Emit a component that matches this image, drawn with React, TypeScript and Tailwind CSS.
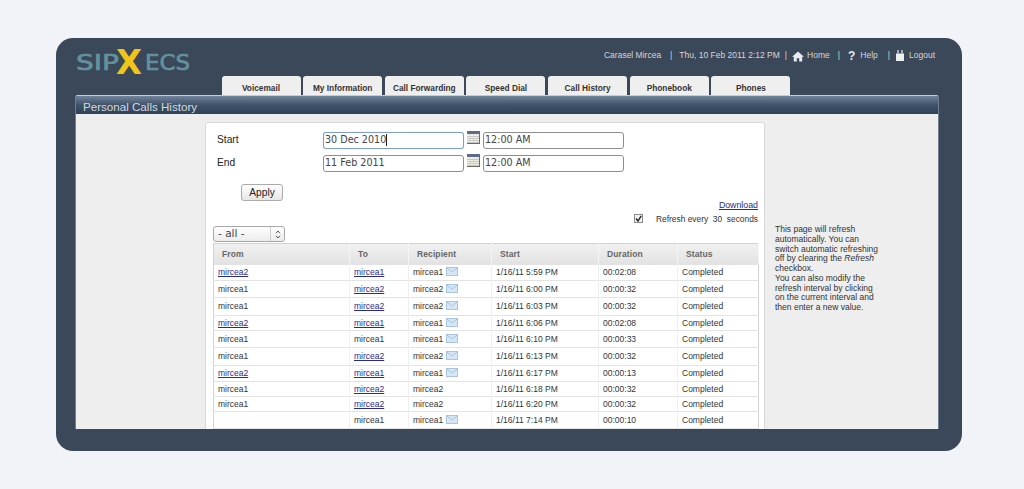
import React from "react";

const tabs = ["Voicemail", "My Information", "Call Forwarding", "Speed Dial", "Call History", "Phonebook", "Phones"];

type Row = { from: string; fromLink: boolean; to: string; toLink: boolean; rec: string; mail: boolean; start: string; dur: string; h: string };
const rows: Row[] = [
  { from: "mircea2", fromLink: true, to: "mircea1", toLink: true, rec: "mircea1", mail: true, start: "1/16/11 5:59 PM", dur: "00:02:08", h: "h-[16px]" },
  { from: "mircea1", fromLink: false, to: "mircea2", toLink: true, rec: "mircea2", mail: true, start: "1/16/11 6:00 PM", dur: "00:00:32", h: "h-[17px]" },
  { from: "mircea1", fromLink: false, to: "mircea2", toLink: true, rec: "mircea2", mail: true, start: "1/16/11 6:03 PM", dur: "00:00:32", h: "h-[18px]" },
  { from: "mircea2", fromLink: true, to: "mircea1", toLink: true, rec: "mircea1", mail: true, start: "1/16/11 6:06 PM", dur: "00:02:08", h: "h-[15px]" },
  { from: "mircea1", fromLink: false, to: "mircea1", toLink: false, rec: "mircea1", mail: true, start: "1/16/11 6:10 PM", dur: "00:00:33", h: "h-[17px]" },
  { from: "mircea1", fromLink: false, to: "mircea2", toLink: true, rec: "mircea2", mail: true, start: "1/16/11 6:13 PM", dur: "00:00:32", h: "h-[18px]" },
  { from: "mircea2", fromLink: true, to: "mircea1", toLink: true, rec: "mircea1", mail: true, start: "1/16/11 6:17 PM", dur: "00:00:13", h: "h-[16px]" },
  { from: "mircea1", fromLink: false, to: "mircea2", toLink: true, rec: "mircea2", mail: false, start: "1/16/11 6:18 PM", dur: "00:00:32", h: "h-[15px]" },
  { from: "mircea1", fromLink: false, to: "mircea2", toLink: true, rec: "mircea2", mail: false, start: "1/16/11 6:20 PM", dur: "00:00:32", h: "h-[15px]" },
  { from: "", fromLink: false, to: "mircea1", toLink: false, rec: "mircea1", mail: true, start: "1/16/11 7:14 PM", dur: "00:00:10", h: "h-[17px]" },
];

function Mail() {
  return (
    <svg width="12" height="9" viewBox="0 0 12 9" className="inline-block ml-[3px] align-[-1px]">
      <rect x="0.5" y="0.5" width="11" height="8" fill="#d6e6f4" stroke="#a8c6e0" />
      <path d="M0.5 0.8 L6 5 L11.5 0.8" fill="none" stroke="#9dbcd8" strokeWidth="0.8" />
    </svg>
  );
}

function Cal() {
  return (
    <svg width="13" height="13" viewBox="0 0 13 13" className="block">
      <rect x="0" y="0" width="13" height="13" fill="#f4f1e6" />
      <rect x="0" y="0" width="13" height="3" fill="#5d6a88" />
      <path d="M0 5.5H13M0 7.5H13M0 9.5H13M0 11.5H13" stroke="#b5b5b5" strokeWidth="0.7" />
      <path d="M3 3V13M6.5 3V13M10 3V13" stroke="#cccccc" strokeWidth="0.6" />
      <path d="M12.5 0V13M0 12.5H13" stroke="#6b6b5f" strokeWidth="1" />
    </svg>
  );
}

function Input({ value, focus }: { value: string; focus?: boolean }) {
  return (
    <div
      className={
        "w-[141px] h-[17px] rounded-[3px] bg-white px-[1px] flex items-center text-[9.6px] text-[#444] font-['DejaVu_Sans',sans-serif] border " +
        (focus ? "border-[#7f9fc4] shadow-[0_0_1px_#9fbcdc]" : "border-[#8e8e8e]")
      }
    >
      {value}
      {focus && <span className="w-px h-[12px] bg-[#222]" />}
    </div>
  );
}

const linkCls = "text-[#2c2a8c] underline";

export default function App() {
  return (
    <div className="w-[1024px] h-[489px] bg-[#f1f3f8] pt-[38px] pl-[56px] font-['Liberation_Sans',Arial,sans-serif] overflow-hidden">
      <div className="w-[906px] h-[413px] bg-[#3a4859] rounded-[17px] pb-[22px] flex flex-col">
        <div className="h-[38px] shrink-0 flex justify-between pl-[19px] pr-[27px]">
          <svg width="118" height="42" viewBox="0 0 118 42" className="mt-[3px]">
            <text x="1" y="29" fontFamily="'DejaVu Sans',sans-serif" fontSize="22" fill="#63929f" stroke="#63929f" strokeWidth="0.7" textLength="43" lengthAdjust="spacingAndGlyphs">SIP</text>
            <text x="41" y="33" fontFamily="'DejaVu Sans',sans-serif" fontWeight="700" fontSize="33" fill="#f0c419" textLength="26" lengthAdjust="spacingAndGlyphs">X</text>
            <text x="70" y="29" fontFamily="'DejaVu Sans',sans-serif" fontSize="22" fill="#63929f" stroke="#63929f" strokeWidth="0.7" textLength="45" lengthAdjust="spacingAndGlyphs">ECS</text>
          </svg>
          <div className="flex items-center h-[12px] mt-[11px] text-[8.5px] text-[#d3d7dc] whitespace-nowrap">
            <span>Carasel Mircea</span>
            <span className="ml-[9px]">|</span>
            <span className="ml-[7px]">Thu, 10 Feb 2011 2:12 PM</span>
            <span className="ml-[5px]">|</span>
            <svg width="12" height="11" viewBox="0 0 12 11" className="ml-[5px] mt-[2px]">
              <path d="M6 0.5 L12 5.8 H10.2 V10.5 H7.2 V7.2 H4.8 V10.5 H1.8 V5.8 H0 Z" fill="#e8eaed" />
            </svg>
            <span className="ml-[3px]">Home</span>
            <span className="ml-[8px]">|</span>
            <span className="ml-[8px] font-bold text-[12px] leading-[12px] text-[#e8eaed] mt-[1px]">?</span>
            <span className="ml-[5px]">Help</span>
            <span className="ml-[10px]">|</span>
            <svg width="8" height="11" viewBox="0 0 8 11" className="ml-[6px] mt-[1px]">
              <rect x="0" y="3.5" width="8" height="7.5" rx="0.5" fill="#eef0f2" />
              <path d="M2 0V3.5M6 0V3.5" stroke="#eef0f2" strokeWidth="1.2" />
            </svg>
            <span className="ml-[5px]">Logout</span>
          </div>
        </div>

        <div className="h-[19px] shrink-0 flex gap-[2.67px] pl-[165.5px]">
          {tabs.map((t) => (
            <div
              key={t}
              className="w-[79px] h-[19px] bg-[#efefef] rounded-t-[3px] flex items-end justify-center pb-[1px] text-[8.3px] leading-[11px] font-bold text-[#333]"
            >
              {t}
            </div>
          ))}
        </div>

        <div className="ml-[19px] w-[864px] flex-1 min-h-0 overflow-hidden flex flex-col rounded-t-[2px] border-x border-[#6f7f92]">
          <div className="h-[19px] shrink-0 bg-gradient-to-b from-[#71849b] via-[#3f5269] to-[#30425a] border-t border-[#c4ccd6] pl-[7px] text-[11.6px] leading-[21px] text-[#d6dade]">
            Personal Calls History
          </div>
          <div className="flex-1 min-h-0 bg-[#eeeeee] flex pl-[129px] pt-[8px]">
            <div className="w-[560px] h-[400px] shrink-0 bg-white rounded-[2px] border border-[#d9d9d9] pl-[7px] pr-[6px] pt-[8px]">
              <div className="flex items-center h-[18px]">
                <span className="w-[110px] pl-[4px] text-[10.2px] text-[#222]">Start</span>
                <Input value="30 Dec 2010" focus />
                <span className="ml-[3px] mr-[3px] -mt-[5px]"><Cal /></span>
                <Input value="12:00 AM" />
              </div>
              <div className="flex items-center h-[18px] mt-[5px]">
                <span className="w-[110px] pl-[4px] text-[10.2px] text-[#222]">End</span>
                <Input value="11 Feb 2011" />
                <span className="ml-[3px] mr-[3px] -mt-[5px]"><Cal /></span>
                <Input value="12:00 AM" />
              </div>
              <div className="ml-[28px] mt-[12px] w-[42px] h-[17px] rounded-[3px] border border-[#aaaaaa] bg-gradient-to-b from-white to-[#e6e6e6] flex items-center justify-center text-[10.2px] text-[#222]">
                Apply
              </div>
              <div className="text-right text-[8.8px] leading-[11px] mt-[-1px] text-[#2c2a8c] underline">Download</div>
              <div className="flex justify-end items-center h-[11px] mt-[3px] text-[8.4px] text-[#333] whitespace-nowrap">
                <span className="w-[9px] h-[9px] border border-[#8a8a8a] bg-[#f2f2f2] flex items-center justify-center mr-[13px] -mt-[2px]">
                  <svg width="7" height="7" viewBox="0 0 7 7"><path d="M1 3.5 L3 6 L6.2 0.8" fill="none" stroke="#222" strokeWidth="1.4" /></svg>
                </span>
                Refresh every&nbsp;&nbsp;30&nbsp;&nbsp;seconds
              </div>
              <div className="mt-[1px] w-[72px] h-[16px] rounded-[3px] border border-[#a8a8a8] bg-gradient-to-b from-white to-[#ececec] flex items-center text-[10.5px] text-[#444] font-['DejaVu_Sans',sans-serif]">
                <span className="flex-1 pl-[4px]">- all -</span>
                <span className="w-[14px] h-full border-l border-[#cccccc] flex items-center justify-center">
                  <svg width="6" height="9" viewBox="0 0 6 9"><path d="M1 3.2 L3 1 L5 3.2M1 5.8 L3 8 L5 5.8" fill="none" stroke="#444" strokeWidth="0.9" /></svg>
                </span>
              </div>
              <table className="mt-[1px] w-[545px] table-fixed border-collapse border border-[#d2d2d2] text-[8.5px] text-[#333]">
                <colgroup>
                  <col className="w-[136px]" />
                  <col className="w-[59px]" />
                  <col className="w-[83px]" />
                  <col className="w-[107px]" />
                  <col className="w-[79px]" />
                  <col className="w-[81px]" />
                </colgroup>
                <thead>
                  <tr className="h-[21px] bg-gradient-to-b from-[#f1f1f1] to-[#e2e2e2]">
                    {["From", "To", "Recipient", "Start", "Duration", "Status"].map((h) => (
                      <th key={h} className="text-left font-bold text-[#666] pl-[8px] border-r border-[#f4f4f4] tracking-[0.1px]">{h}</th>
                    ))}
                  </tr>
                </thead>
                <tbody>
                  {rows.map((r, i) => (
                    <tr key={i} className={r.h + " border-b border-[#e3e3e3]"}>
                      <td className="pl-[4px] border-r border-[#efefef]">{r.fromLink ? <span className={linkCls}>{r.from}</span> : r.from}</td>
                      <td className="pl-[4px] border-r border-[#efefef]">{r.toLink ? <span className={linkCls}>{r.to}</span> : r.to}</td>
                      <td className="pl-[4px] border-r border-[#efefef] whitespace-nowrap">{r.rec}{r.mail && <Mail />}</td>
                      <td className="pl-[4px] border-r border-[#efefef]">{r.start}</td>
                      <td className="pl-[4px] border-r border-[#efefef]">{r.dur}</td>
                      <td className="pl-[4px]">Completed</td>
                    </tr>
                  ))}
                </tbody>
              </table>
            </div>
            <div className="ml-[10px] mt-[103px] text-[8.5px] leading-[9.75px] text-[#333] whitespace-nowrap">
              This page will refresh<br />
              automatically. You can<br />
              switch automatic refreshing<br />
              off by clearing the <em>Refresh</em><br />
              checkbox.<br />
              You can also modify the<br />
              refresh interval by clicking<br />
              on the current interval and<br />
              then enter a new value.
            </div>
          </div>
        </div>
      </div>
    </div>
  );
}
